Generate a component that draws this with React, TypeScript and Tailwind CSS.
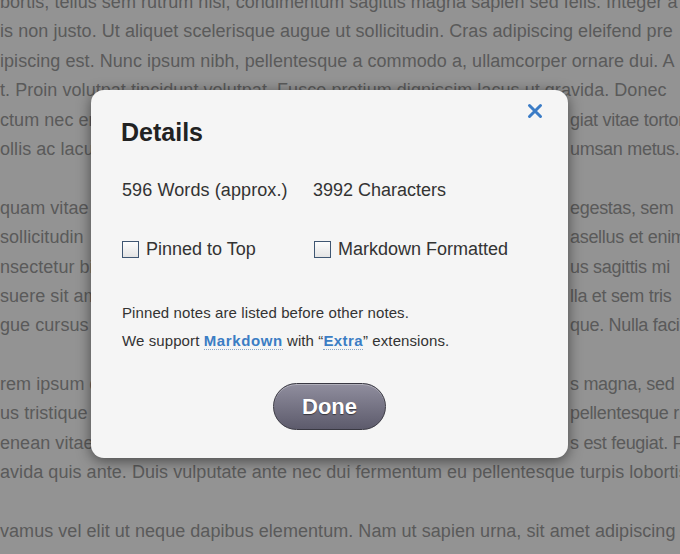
import React from "react";

const fullLines = {
  top: [
    "bortis, tellus sem rutrum nisi, condimentum sagittis magna sapien sed felis. Integer a",
    "is non justo. Ut aliquet scelerisque augue ut sollicitudin. Cras adipiscing eleifend pre",
    "ipiscing est. Nunc ipsum nibh, pellentesque a commodo a, ullamcorper ornare dui. A",
    "t. Proin volutpat tincidunt volutpat. Fusce pretium dignissim lacus ut gravida. Donec",
  ],
};

// left fragment / right fragment of lines that sit behind the dialog
const splitParas: [string, string][][] = [
  [
    ["ctum nec erat", "giat vitae tortor"],
    ["ollis ac lacus", "umsan metus."],
  ],
  [
    ["quam vitae", "egestas, sem"],
    ["sollicitudin", "asellus et enim"],
    ["nsectetur bibendum", "us sagittis mi"],
    ["suere sit amet", "lla et sem tris"],
    ["gue cursus", "que. Nulla facil"],
  ],
  [
    ["rem ipsum dolor", "s magna, sed"],
    ["us tristique", "pellentesque r"],
    ["enean vitae", "s est feugiat. F"],
  ],
];

function Line({ children }: { children: React.ReactNode }) {
  return <div className="h-[29.4px] whitespace-nowrap">{children}</div>;
}

function SplitLine({ left, right }: { left: string; right: string }) {
  return (
    <div className="flex h-[29.4px] whitespace-nowrap">
      <div className="w-[570px] shrink-0 overflow-hidden">{left}</div>
      <div className="tracking-[-0.3px]">{right}</div>
    </div>
  );
}

function Checkbox({ label }: { label: string }) {
  return (
    <label className="flex items-center gap-[7px]">
      <span className="block h-[17px] w-[17px] border-[1.5px] border-[#3f5672] bg-gradient-to-b from-[#fdfdfd] to-[#e4e4e4]" />
      <span>{label}</span>
    </label>
  );
}

export default function App() {
  return (
    <div className="relative h-[554px] w-[680px] overflow-hidden bg-[#939393] font-['Liberation_Sans',Arial,sans-serif] text-[18px] leading-[29.4px] text-[#5a5a5a]">
      <div className="mt-[-12px] tracking-[0.05px]">
        {fullLines.top.map((l, i) => (
          <Line key={i}>{l}</Line>
        ))}
        {splitParas[0].map(([a, b], i) => (
          <SplitLine key={i} left={a} right={b} />
        ))}
        <Line>{"\u00a0"}</Line>
        {splitParas[1].map(([a, b], i) => (
          <SplitLine key={i} left={a} right={b} />
        ))}
        <Line>{"\u00a0"}</Line>
        {splitParas[2].map(([a, b], i) => (
          <SplitLine key={i} left={a} right={b} />
        ))}
        <Line>avida quis ante. Duis vulputate ante nec dui fermentum eu pellentesque turpis lobortis</Line>
        <Line>{"\u00a0"}</Line>
        <Line>vamus vel elit ut neque dapibus elementum. Nam ut sapien urna, sit amet adipiscing</Line>
      </div>

      {/* dialog */}
      <div className="absolute left-[91px] top-[90px] w-[477px] rounded-[13px] bg-[#f5f5f5] px-[30px] pb-[28px] pt-[28px] text-[#333] shadow-[0_3px_14px_rgba(0,0,0,0.5)]">
        <button className="absolute left-[436px] top-[13px] flex h-[16px] w-[16px] items-center justify-center">
          <svg viewBox="0 0 16 16" className="h-[16px] w-[16px]">
            <path d="M2.5 2.5 L13.5 13.5 M13.5 2.5 L2.5 13.5" stroke="#3b7cc6" strokeWidth="3" strokeLinecap="round" />
          </svg>
        </button>

        <h1 className="text-[25px] font-bold leading-[28px] text-[#222]">Details</h1>

        <div className="mt-[32px] flex text-[18px] leading-[24px]">
          <div className="w-[192px] pl-px tracking-[0.1px]">596 Words (approx.)</div>
          <div>3992 Characters</div>
        </div>

        <div className="mt-[35px] flex pl-px text-[18px] leading-[24px]">
          <div className="w-[192px]">
            <Checkbox label="Pinned to Top" />
          </div>
          <Checkbox label="Markdown Formatted" />
        </div>

        <div className="mt-[38px] pl-px text-[15px] leading-[28px] tracking-[0.1px] text-[#333]">
          <p>Pinned notes are listed before other notes.</p>
          <p>
            We support{" "}
            <a className="border-b border-dotted border-[#8aa6c4] font-bold tracking-[0.6px] text-[#3b7dc4]">Markdown</a> with “
            <a className="border-b border-dotted border-[#8aa6c4] font-bold tracking-[0.4px] text-[#3b7dc4]">Extra</a>” extensions.
          </p>
        </div>

        <div className="mt-[28px] flex justify-center">
          <button className="h-[47px] w-[113px] rounded-full border-[1.5px] border-[#393842] bg-gradient-to-b from-[#908e9e] to-[#5d5b6c] text-[22px] font-bold text-white shadow-[inset_0_1px_0_rgba(255,255,255,0.3)] [text-shadow:0_1px_1px_rgba(0,0,0,0.5)]">
            Done
          </button>
        </div>
      </div>
    </div>
  );
}
